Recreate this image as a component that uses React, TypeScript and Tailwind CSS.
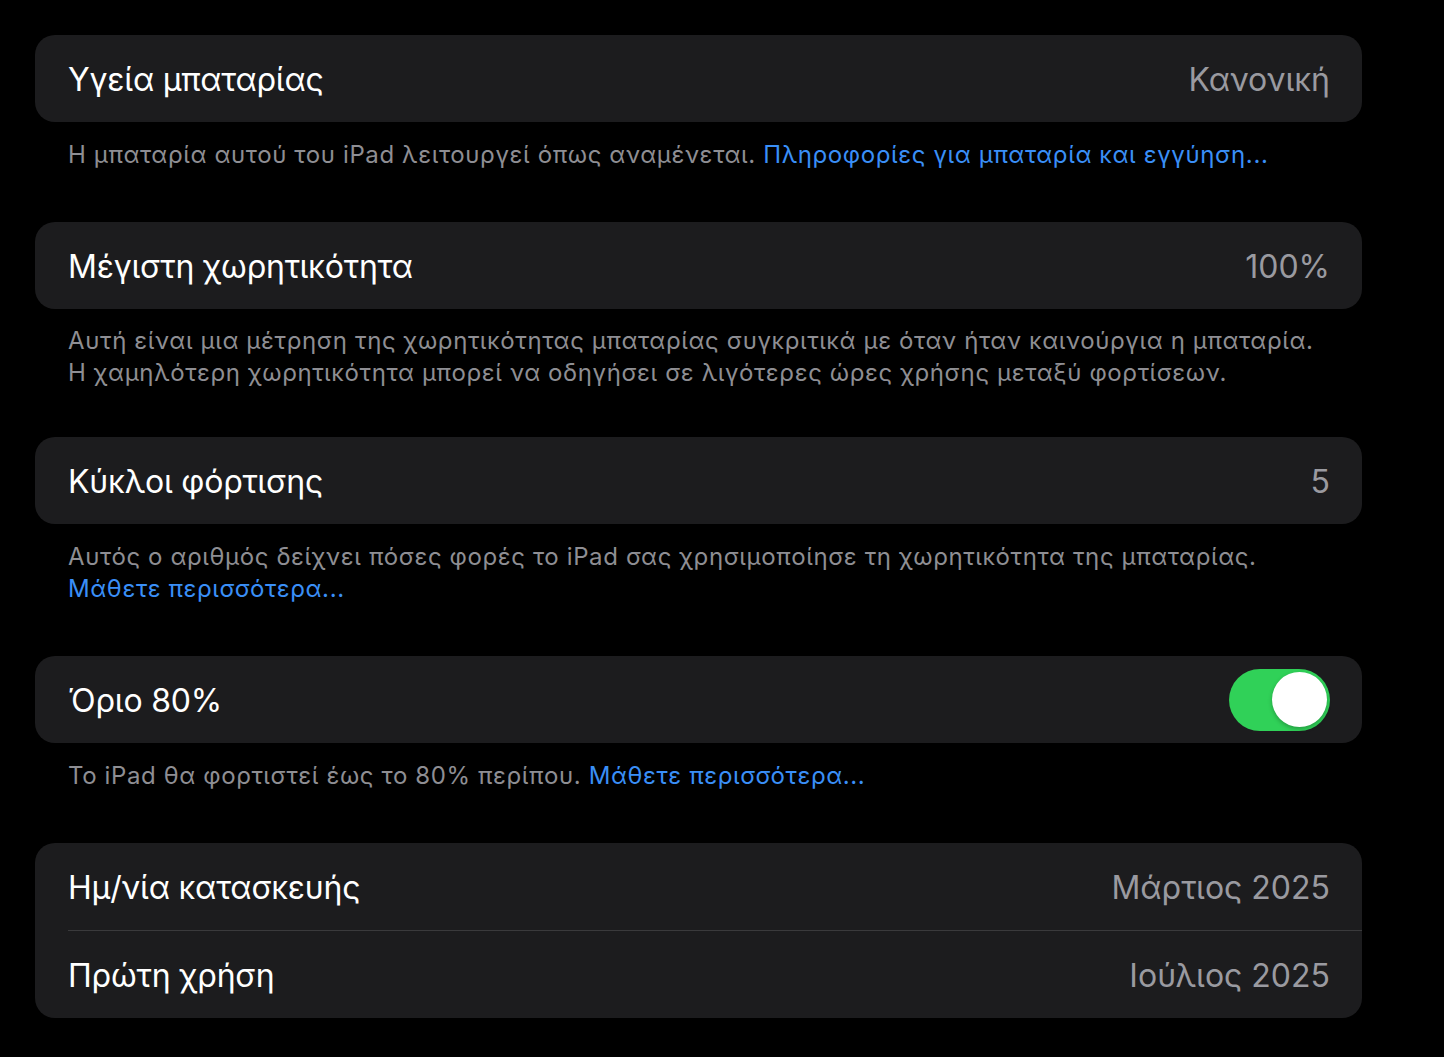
import { ReactNode } from "react";

const font = { fontFamily: "Inter, 'Noto Sans', sans-serif" };

const Row = ({ label, value, right }: { label: string; value?: string; right?: ReactNode }) => (
  <div className="flex items-center justify-between h-[87px] pl-[33px] pr-[32px]">
    <span className="text-[32px] text-white tracking-[-0.2px] pt-[3px]">{label}</span>
    {right ?? <span className="text-[32px] text-[#9a9aa0] tracking-[0px] pt-[3px]">{value}</span>}
  </div>
);

const Footer = ({ children, tight }: { children: ReactNode; tight?: boolean }) => (
  <p
    className={`${tight ? "pt-4 pb-12" : "pt-[17px] pb-[51px]"} pl-[33px] pr-8 text-[24px] leading-[32px] tracking-[0.62px] text-[#8e8e93]`}
  >
    {children}
  </p>
);

const Link = ({ children }: { children: ReactNode }) => (
  <span className="text-[#3a8ff7]">{children}</span>
);

const Toggle = () => (
  <div className="w-[101px] h-[62px] rounded-full bg-[#30d158] flex items-center justify-end pr-[3px]">
    <div className="h-[55px] w-[55px] rounded-full bg-white shadow-[0_2px_4px_rgba(0,0,0,0.25)]" />
  </div>
);

export default function App() {
  return (
    <div className="min-h-[1057px] w-[1444px] bg-black pt-[35px] pl-[35px] pr-[82px]" style={font}>
      <div className="rounded-[20px] bg-[#1c1c1e]">
        <Row label="Υγεία μπαταρίας" value="Κανονική" />
      </div>
      <Footer>
        Η μπαταρία αυτού του iPad λειτουργεί όπως αναμένεται.{" "}
        <Link>Πληροφορίες για μπαταρία και εγγύηση...</Link>
      </Footer>

      <div className="rounded-[20px] bg-[#1c1c1e]">
        <Row label="Μέγιστη χωρητικότητα" value="100%" />
      </div>
      <Footer tight>
        Αυτή είναι μια μέτρηση της χωρητικότητας μπαταρίας συγκριτικά με όταν ήταν καινούργια η μπαταρία.
        <br />
        Η χαμηλότερη χωρητικότητα μπορεί να οδηγήσει σε λιγότερες ώρες χρήσης μεταξύ φορτίσεων.
      </Footer>

      <div className="rounded-[20px] bg-[#1c1c1e]">
        <Row label="Κύκλοι φόρτισης" value="5" />
      </div>
      <Footer>
        Αυτός ο αριθμός δείχνει πόσες φορές το iPad σας χρησιμοποίησε τη χωρητικότητα της μπαταρίας.
        <br />
        <Link>Μάθετε περισσότερα...</Link>
      </Footer>

      <div className="rounded-[20px] bg-[#1c1c1e]">
        <Row label="Όριο 80%" right={<Toggle />} />
      </div>
      <Footer>
        Το iPad θα φορτιστεί έως το 80% περίπου. <Link>Μάθετε περισσότερα...</Link>
      </Footer>

      <div className="rounded-[20px] bg-[#1c1c1e] overflow-hidden">
        <Row label="Ημ/νία κατασκευής" value="Μάρτιος 2025" />
        <div className="ml-[33px] h-px bg-[#3a3a3c]" />
        <Row label="Πρώτη χρήση" value="Ιούλιος 2025" />
      </div>
    </div>
  );
}
